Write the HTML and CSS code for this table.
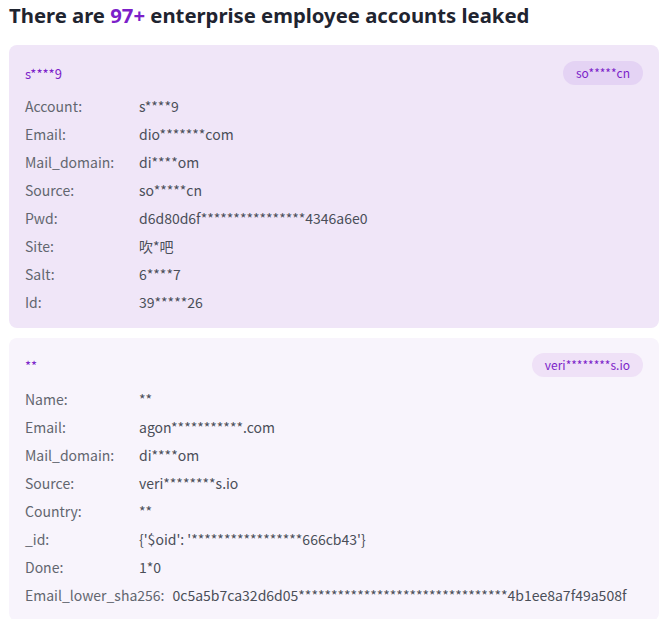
FILE: index.html
```html
<!DOCTYPE html>
<html>
<head>
<meta charset="utf-8">
<link rel="stylesheet" href="styles.css">
</head>
<body>
<div class="wrap">
  <h1 class="title">There are <span class="hl">97+</span> enterprise employee accounts leaked</h1>
  <div class="card card-a">
    <div class="card-head"><span class="name">s****9</span><span class="badge">so*****cn</span></div>
    <div class="row"><span class="lbl">Account:</span><span class="val">s****9</span></div>
    <div class="row"><span class="lbl">Email:</span><span class="val">dio*******com</span></div>
    <div class="row"><span class="lbl">Mail_domain:</span><span class="val">di****om</span></div>
    <div class="row"><span class="lbl">Source:</span><span class="val">so*****cn</span></div>
    <div class="row"><span class="lbl">Pwd:</span><span class="val">d6d80d6f****************4346a6e0</span></div>
    <div class="row"><span class="lbl">Site:</span><span class="val">吹*吧</span></div>
    <div class="row"><span class="lbl">Salt:</span><span class="val">6****7</span></div>
    <div class="row"><span class="lbl">Id:</span><span class="val">39*****26</span></div>
  </div>
  <div class="card card-b">
    <div class="card-head"><span class="name">**</span><span class="badge">veri********s.io</span></div>
    <div class="row"><span class="lbl">Name:</span><span class="val">**</span></div>
    <div class="row"><span class="lbl">Email:</span><span class="val">agon***********.com</span></div>
    <div class="row"><span class="lbl">Mail_domain:</span><span class="val">di****om</span></div>
    <div class="row"><span class="lbl">Source:</span><span class="val">veri********s.io</span></div>
    <div class="row"><span class="lbl">Country:</span><span class="val">**</span></div>
    <div class="row"><span class="lbl">_id:</span><span class="val">{'$oid': '*****************666cb43'}</span></div>
    <div class="row"><span class="lbl">Done:</span><span class="val">1*0</span></div>
    <div class="row"><span class="lbl">Email_lower_sha256:</span><span class="val">0c5a5b7ca32d6d05********************************4b1ee8a7f49a508f</span></div>
  </div>
</div>
</body>
</html>
```
FILE: styles.css
```css
html, body { margin: 0; padding: 0; background: #fff; }
body { font-family: "Noto Sans CJK SC", "Noto Sans", sans-serif; }
.wrap { width: 650px; margin-left: 9px; padding-top: 1px; }
.title {
  margin: 0 0 16px 0;
  font-family: "Noto Sans", "Noto Sans CJK SC", sans-serif;
  font-size: 20.3px;
  font-weight: 700;
  line-height: 28px;
  color: #1f2430;
}
.hl { color: #7c1fc9; }
.card { border-radius: 8px; padding: 16px 16px 12px 16px; margin-bottom: 10px; }
.card-a { background: #f0e6f8; }
.card-b { background: #f8f4fc; padding-top: 15px; }
.card-head { display: flex; justify-content: space-between; align-items: center; height: 24px; margin-bottom: 7px; }
.card-b .card-head { margin-bottom: 8px; }
.name { color: #7c1fc9; font-size: 13px; }
.badge { color: #7c1fc9; font-size: 12px; padding: 0 13px; height: 24px; line-height: 24px; border-radius: 12px; }
.card-a .badge { background: #e4d3f4; }
.card-b .badge { background: #efe1f7; }
.row { display: flex; height: 28px; align-items: center; font-size: 14px; color: #555a66; }
.lbl { min-width: 106px; margin-right: 8px; color: #62666f; }
.val { color: #4a4e58; }
```
